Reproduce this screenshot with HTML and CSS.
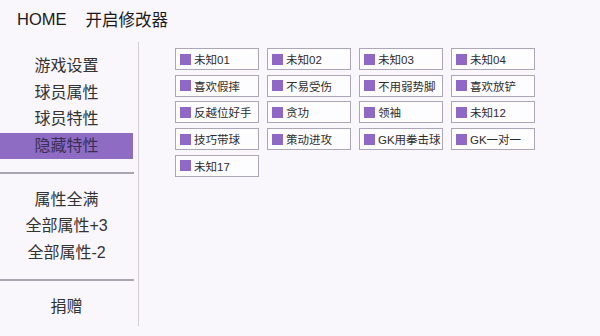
FILE: index.html
```html
<!DOCTYPE html>
<html lang="zh">
<head>
<meta charset="utf-8">
<link rel="stylesheet" href="styles.css">
</head>
<body>
<header class="top">
  <span class="home">HOME</span>
  <span class="title">开启修改器</span>
</header>
<div class="main">
  <nav class="side">
    <div class="item">游戏设置</div>
    <div class="item">球员属性</div>
    <div class="item">球员特性</div>
    <div class="item active">隐藏特性</div>
    <hr class="div">
    <div class="item">属性全满</div>
    <div class="item">全部属性+3</div>
    <div class="item">全部属性-2</div>
    <hr class="div">
    <div class="item">捐赠</div>
  </nav>
  <section class="content">
    <div class="grid">
      <label class="opt"><span class="box"></span>未知01</label>
      <label class="opt"><span class="box"></span>未知02</label>
      <label class="opt"><span class="box"></span>未知03</label>
      <label class="opt"><span class="box"></span>未知04</label>
      <label class="opt"><span class="box"></span>喜欢假摔</label>
      <label class="opt"><span class="box"></span>不易受伤</label>
      <label class="opt"><span class="box"></span>不用弱势脚</label>
      <label class="opt"><span class="box"></span>喜欢放铲</label>
      <label class="opt"><span class="box"></span>反越位好手</label>
      <label class="opt"><span class="box"></span>贪功</label>
      <label class="opt"><span class="box"></span>领袖</label>
      <label class="opt"><span class="box"></span>未知12</label>
      <label class="opt"><span class="box"></span>技巧带球</label>
      <label class="opt"><span class="box"></span>策动进攻</label>
      <label class="opt"><span class="box"></span>GK用拳击球</label>
      <label class="opt"><span class="box"></span>GK一对一</label>
      <label class="opt"><span class="box"></span>未知17</label>
    </div>
  </section>
</div>
</body>
</html>
```
FILE: styles.css
```css
html, body {
  margin: 0;
  padding: 0;
  background: #f9f6fc;
  font-family: "Liberation Sans", "Noto Sans CJK SC", sans-serif;
  color: #2b2b2b;
}
.top {
  height: 42px;
  display: flex;
  align-items: center;
  padding-left: 17px;
  padding-bottom: 4px;
  box-sizing: border-box;
  font-size: 16.5px;
  color: #1a1a1a;
}
.home {
  margin-right: 19px;
}
.main {
  display: flex;
  height: 284px;
}
.side {
  width: 139px;
  border-right: 1px solid #d2cdd9;
  padding-top: 11px;
  box-sizing: border-box;
}
.item {
  width: 133px;
  height: 26.5px;
  line-height: 26.5px;
  text-align: center;
  font-size: 16px;
  color: #333;
}
.item.active {
  background: #8f6cc4;
  color: #3a2f55;
}
.div {
  width: 134px;
  margin: 12.5px 0 13px 0;
  border: 0;
  height: 2px;
  background: #a9a5b1;
}
.content {
  padding: 6px 0 0 36px;
}
.grid {
  display: grid;
  grid-template-columns: repeat(4, 84px);
  grid-auto-rows: 22px;
  column-gap: 8px;
  row-gap: 4.7px;
}
.opt {
  display: flex;
  align-items: center;
  border: 1px solid #aca6b9;
  background: #fdfcfe;
  font-size: 11.5px;
  color: #2e2e2e;
  box-sizing: border-box;
  padding-left: 4px;
  white-space: nowrap;
  overflow: hidden;
}
.box {
  width: 11px;
  height: 11px;
  background: #8f67c5;
  margin-right: 3px;
  flex: none;
}
```
